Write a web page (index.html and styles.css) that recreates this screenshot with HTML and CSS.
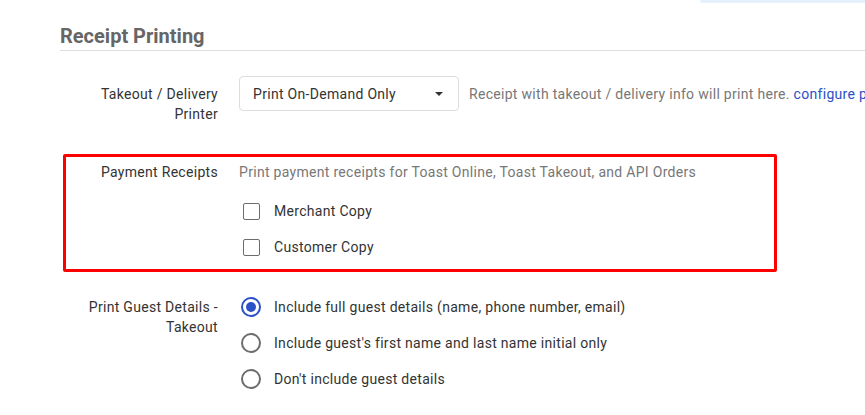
FILE: index.html
```html
<!DOCTYPE html>
<html lang="en">

<head>
    <meta charset="UTF-8">
    <meta name="viewport" content="width=device-width, initial-scale=1.0">
    <title>Receipt Printing</title>
    <link rel="stylesheet" href="styles.css">
</head>

<body>
    <div class="top-strip"></div>

    <section class="settings">
        <h2 class="section-title">Receipt Printing</h2>

        <div class="field">
            <div class="field-label">Takeout / Delivery<br>Printer</div>
            <div class="field-control inline">
                <div class="select">
                    <span>Print On-Demand Only</span>
                    <span class="caret"></span>
                </div>
                <span class="help">Receipt with takeout / delivery info will print here. <a href="#">configure printers</a></span>
            </div>
        </div>

        <div class="field highlighted">
            <div class="field-label">Payment Receipts</div>
            <div class="field-control">
                <div class="help">Print payment receipts for Toast Online, Toast Takeout, and API Orders</div>
                <div class="options">
                    <label class="option"><span class="mark"><span class="checkbox"></span></span>Merchant Copy</label>
                    <label class="option"><span class="mark"><span class="checkbox"></span></span>Customer Copy</label>
                </div>
            </div>
        </div>

        <div class="field guest">
            <div class="field-label">Print Guest Details -<br>Takeout</div>
            <div class="field-control">
                <div class="options">
                    <label class="option"><span class="mark"><span class="radio checked"></span></span>Include full guest details (name, phone number, email)</label>
                    <label class="option"><span class="mark"><span class="radio"></span></span>Include guest's first name and last name initial only</label>
                    <label class="option"><span class="mark"><span class="radio"></span></span>Don't include guest details</label>
                </div>
            </div>
        </div>
    </section>
</body>

</html>
```

FILE: styles.css
```css
body {
    margin: 0;
    font-family: 'Roboto', 'Liberation Sans', sans-serif;
    font-size: 14px;
    line-height: 20px;
    letter-spacing: 0.3px;
    color: #333;
    background-color: #fff;
    overflow: hidden;
    white-space: nowrap;
}

.top-strip {
    margin-left: auto;
    width: 165px;
    height: 3px;
    background-color: #e4f0fb;
    border-bottom-left-radius: 3px;
}

.settings {
    padding: 22px 0 0 60px;
}

.section-title {
    margin: 0 0 25px 0;
    padding-bottom: 3px;
    font-size: 20px;
    line-height: 22px;
    letter-spacing: 0;
    font-weight: bold;
    color: #666;
    border-bottom: 1px solid #ddd;
}

.field {
    display: grid;
    grid-template-columns: 158px 1fr;
    column-gap: 21px;
}

.field-label {
    padding-top: 8px;
    text-align: right;
    color: #333;
}

.field-control.inline {
    display: flex;
    align-items: center;
    gap: 10px;
    align-self: start;
}

.select {
    box-sizing: border-box;
    width: 220px;
    height: 35px;
    padding: 0 13px;
    display: flex;
    align-items: center;
    justify-content: space-between;
    border: 1px solid #ddd;
    border-radius: 4px;
    color: #333;
}

.caret {
    width: 0;
    height: 0;
    margin-right: 2px;
    border-left: 4px solid transparent;
    border-right: 4px solid transparent;
    border-top: 4px solid #333;
}

.help {
    color: #777;
}

.help a {
    color: #2b50c8;
    text-decoration: none;
}

.highlighted {
    box-sizing: border-box;
    width: 714px;
    margin: 30px 0 0 3px;
    padding: 5px 0 4px 0;
    border: 3px solid #ff0000;
    border-radius: 2px;
    grid-template-columns: 152px 1fr;
}

.highlighted .field-label {
    padding-top: 0;
}

.highlighted .options {
    margin-top: 11px;
}

.guest {
    margin-top: 17px;
}

.option {
    height: 36px;
    display: flex;
    align-items: center;
    gap: 11px;
    color: #333;
}

.mark {
    width: 24px;
    display: flex;
    justify-content: center;
}

.checkbox {
    box-sizing: border-box;
    width: 17px;
    height: 17px;
    border: 1.5px solid #6d6d6d;
    border-radius: 2px;
}

.radio {
    box-sizing: border-box;
    width: 20px;
    height: 20px;
    border: 2px solid #6d6d6d;
    border-radius: 50%;
    display: flex;
    align-items: center;
    justify-content: center;
}

.radio.checked {
    border-color: #2b50c8;
}

.radio.checked::after {
    content: "";
    width: 10px;
    height: 10px;
    border-radius: 50%;
    background-color: #2b50c8;
}
```
